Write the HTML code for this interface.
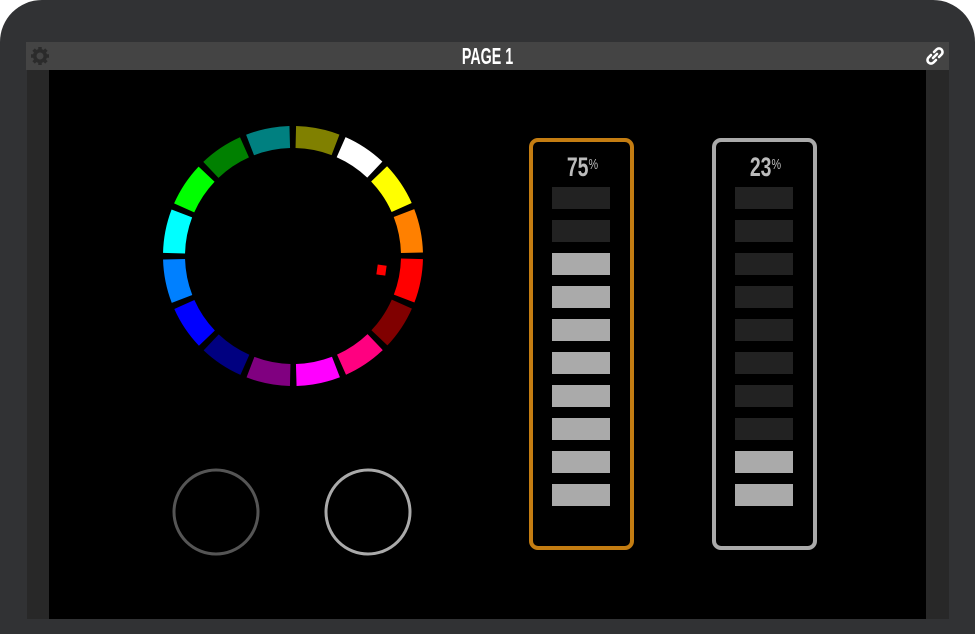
<!DOCTYPE html>
<html><head><meta charset="utf-8"><style>
html,body{margin:0;padding:0;background:#fff;}
body{width:975px;height:634px;position:relative;overflow:hidden;font-family:"Liberation Sans Narrow","Liberation Sans",sans-serif;}
.frame{position:absolute;left:0;top:0;width:975px;height:634px;background:#313234;border-radius:42px 42px 0 0;}
.hdr{position:absolute;left:26px;top:42px;width:923px;height:28px;background:#444;}
.title{position:absolute;left:0;right:0;top:2px;text-align:center;color:#fff;font-weight:bold;font-size:23px;line-height:24px;transform:scaleX(0.62);}
.side{position:absolute;top:70px;height:549px;width:23px;background:#282828;}
.main{position:absolute;left:49px;top:70px;width:877px;height:549px;background:#000;}
.box{position:absolute;width:97px;height:404px;border:4px solid;border-radius:9px;}
.bar{position:absolute;left:19px;width:58px;height:22px;}
.pct{position:absolute;top:12px;left:2px;right:0;text-align:center;color:#bbb;font-weight:bold;font-size:27px;line-height:26px;transform:scaleX(0.72);}
.pct sup{font-size:15px;vertical-align:top;position:relative;top:-2px;font-weight:normal;}
</style></head><body>
<div class="frame"></div>
<div class="hdr">
  <svg style="position:absolute;left:4px;top:4px" width="20" height="20" viewBox="0 0 20 20">
    <g fill="#2b2b2b"><circle cx="10" cy="10" r="7"/>
    <g stroke="#2b2b2b" stroke-width="3.5"><line x1="10" y1="1" x2="10" y2="19"/><line x1="1" y1="10" x2="19" y2="10"/><line x1="3.6" y1="3.6" x2="16.4" y2="16.4"/><line x1="16.4" y1="3.6" x2="3.6" y2="16.4"/></g></g>
    <circle cx="10" cy="10" r="3.5" fill="#444"/>
  </svg>
  <div class="title">PAGE 1</div>
  <svg style="position:absolute;right:4px;top:4px" width="20" height="20" viewBox="0 0 20 20" fill="none" stroke="#fff" stroke-width="2.6" stroke-linecap="round">
    <path d="M8 12 L12 8"/>
    <path d="M9 6 L11.5 3.5 a3 3 0 0 1 5 5 L14 11"/>
    <path d="M11 14 L8.5 16.5 a3 3 0 0 1 -5 -5 L6 9"/>
  </svg>
</div>
<div class="side" style="left:27px"></div>
<div class="side" style="left:926px"></div>
<div class="main"></div>
<svg style="position:absolute;left:0;top:0" width="975" height="634">
  <g fill="none" stroke-width="22">
    <circle cx="293" cy="256" r="119" pathLength="360" stroke-dasharray="19.6 340.4" stroke="#808000" transform="rotate(-88.65 293 256)"/>
    <circle cx="293" cy="256" r="119" pathLength="360" stroke-dasharray="19.6 340.4" stroke="#ffffff" transform="rotate(-66.15 293 256)"/>
    <circle cx="293" cy="256" r="119" pathLength="360" stroke-dasharray="19.6 340.4" stroke="#ffff00" transform="rotate(-43.65 293 256)"/>
    <circle cx="293" cy="256" r="119" pathLength="360" stroke-dasharray="19.6 340.4" stroke="#ff8000" transform="rotate(-21.15 293 256)"/>
    <circle cx="293" cy="256" r="119" pathLength="360" stroke-dasharray="19.6 340.4" stroke="#ff0000" transform="rotate(1.35 293 256)"/>
    <circle cx="293" cy="256" r="119" pathLength="360" stroke-dasharray="19.6 340.4" stroke="#800000" transform="rotate(23.85 293 256)"/>
    <circle cx="293" cy="256" r="119" pathLength="360" stroke-dasharray="19.6 340.4" stroke="#ff0080" transform="rotate(46.35 293 256)"/>
    <circle cx="293" cy="256" r="119" pathLength="360" stroke-dasharray="19.6 340.4" stroke="#ff00ff" transform="rotate(68.85 293 256)"/>
    <circle cx="293" cy="256" r="119" pathLength="360" stroke-dasharray="19.6 340.4" stroke="#800080" transform="rotate(91.35 293 256)"/>
    <circle cx="293" cy="256" r="119" pathLength="360" stroke-dasharray="19.6 340.4" stroke="#000080" transform="rotate(113.85 293 256)"/>
    <circle cx="293" cy="256" r="119" pathLength="360" stroke-dasharray="19.6 340.4" stroke="#0000ff" transform="rotate(136.35 293 256)"/>
    <circle cx="293" cy="256" r="119" pathLength="360" stroke-dasharray="19.6 340.4" stroke="#0080ff" transform="rotate(158.85 293 256)"/>
    <circle cx="293" cy="256" r="119" pathLength="360" stroke-dasharray="19.6 340.4" stroke="#00ffff" transform="rotate(181.35 293 256)"/>
    <circle cx="293" cy="256" r="119" pathLength="360" stroke-dasharray="19.6 340.4" stroke="#00ff00" transform="rotate(203.85 293 256)"/>
    <circle cx="293" cy="256" r="119" pathLength="360" stroke-dasharray="19.6 340.4" stroke="#008000" transform="rotate(226.35 293 256)"/>
    <circle cx="293" cy="256" r="119" pathLength="360" stroke-dasharray="19.6 340.4" stroke="#008080" transform="rotate(248.85 293 256)"/>
  </g>
  <rect x="377" y="265" width="9" height="10" fill="#ff0000" transform="rotate(8 381 270)"/>
  <circle cx="216" cy="512" r="42" fill="none" stroke="#555" stroke-width="3"/>
  <circle cx="368" cy="512" r="42" fill="none" stroke="#aaa" stroke-width="3"/>
</svg>
<div class="box" style="left:529px;top:138px;border-color:#c47d12">
  <div class="pct">75<sup>%</sup></div>
  <div class="bar" style="top:45px;background:#222"></div>
  <div class="bar" style="top:78px;background:#222"></div>
  <div class="bar" style="top:111px;background:#aaa"></div>
  <div class="bar" style="top:144px;background:#aaa"></div>
  <div class="bar" style="top:177px;background:#aaa"></div>
  <div class="bar" style="top:210px;background:#aaa"></div>
  <div class="bar" style="top:243px;background:#aaa"></div>
  <div class="bar" style="top:276px;background:#aaa"></div>
  <div class="bar" style="top:309px;background:#aaa"></div>
  <div class="bar" style="top:342px;background:#aaa"></div>
</div>
<div class="box" style="left:712px;top:138px;border-color:#aaa">
  <div class="pct">23<sup>%</sup></div>
  <div class="bar" style="top:45px;background:#222"></div>
  <div class="bar" style="top:78px;background:#222"></div>
  <div class="bar" style="top:111px;background:#222"></div>
  <div class="bar" style="top:144px;background:#222"></div>
  <div class="bar" style="top:177px;background:#222"></div>
  <div class="bar" style="top:210px;background:#222"></div>
  <div class="bar" style="top:243px;background:#222"></div>
  <div class="bar" style="top:276px;background:#222"></div>
  <div class="bar" style="top:309px;background:#aaa"></div>
  <div class="bar" style="top:342px;background:#aaa"></div>
</div>
</body></html>
